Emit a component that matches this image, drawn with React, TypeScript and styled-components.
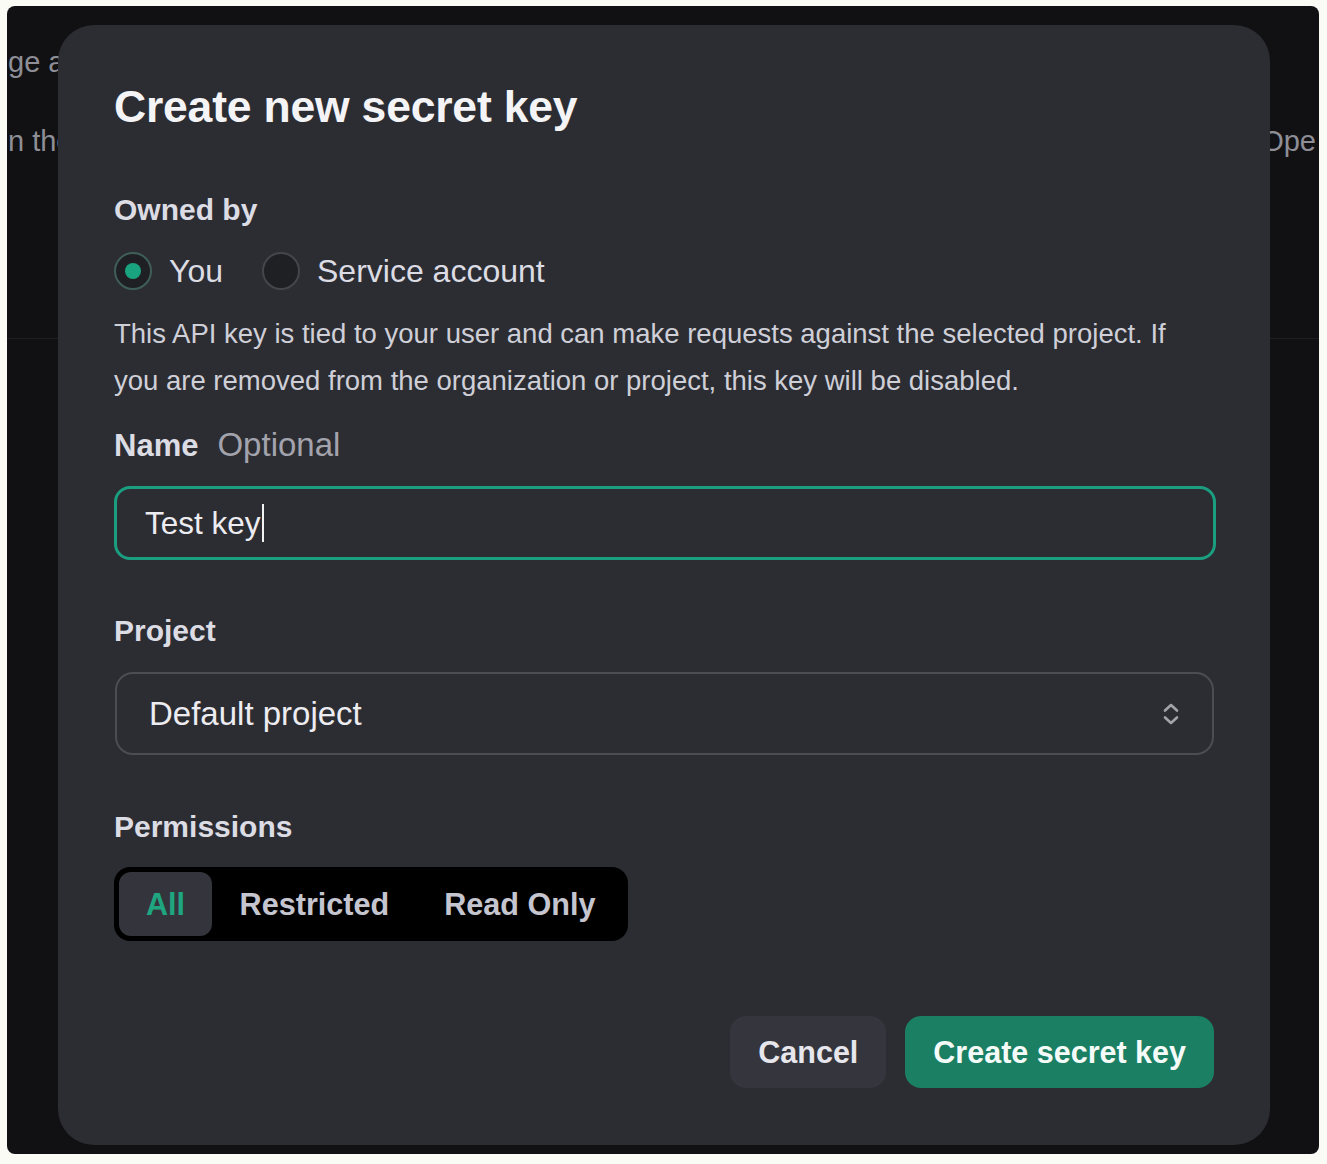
import React from "react";
import styled, { createGlobalStyle } from "styled-components";

const Global = createGlobalStyle`
  html, body { margin: 0; padding: 0; background: #fbfbf6; }
  body { font-family: "Liberation Sans", Arial, sans-serif; }
  * { box-sizing: border-box; }
`;

const Frame = styled.div`
  position: relative;
  margin: 6px 0 0 7px;
  width: 1312px;
  height: 1148px;
  border-radius: 8px;
  background: #111114;
  overflow: hidden;
  font-family: "Liberation Sans", Arial, sans-serif;
`;

const BgHeader = styled.div`
  height: 333px;
  border-bottom: 1px solid #1e1f22;
  padding-top: 40px;
  display: flex;
  flex-direction: column;
  gap: 47px;
`;

const BgLine = styled.div`
  display: flex;
  justify-content: space-between;
  white-space: nowrap;
  color: #8e8e96;
  font-size: 29px;
  line-height: 32px;
  padding: 0 3px 0 1px;
`;

const Modal = styled.div`
  position: absolute;
  left: 51px;
  top: 19px;
  width: 1212px;
  height: 1120px;
  border-radius: 36px;
  background: #2c2d32;
  padding: 55px 56px 0 56px;
  display: flex;
  flex-direction: column;
`;

const Title = styled.h2`
  margin: 0;
  font-size: 44.5px;
  line-height: 1.2;
  font-weight: 700;
  color: #f4f4f7;
  letter-spacing: -0.2px;
`;

const Label = styled.div<{ $mt: number }>`
  margin-top: ${(p) => p.$mt}px;
  font-size: 30px;
  line-height: 36px;
  font-weight: 700;
  color: #dcdce4;
  display: flex;
  align-items: baseline;
  gap: 19px;
`;

const NameText = styled.span`
  font-size: 31px;
`;

const Hint = styled.span`
  font-weight: 400;
  color: #a3a3ad;
  font-size: 33px;
`;

const RadioRow = styled.div`
  margin-top: 24px;
  display: flex;
  align-items: center;
  height: 38px;
`;

const RadioOption = styled.label`
  display: flex;
  align-items: center;
  gap: 17px;
  margin-right: 39px;
  font-size: 32px;
  color: #dcdce4;
  cursor: pointer;
`;

const RadioCircle = styled.span<{ $on?: boolean }>`
  width: 38px;
  height: 38px;
  border-radius: 50%;
  background: #1f2024;
  border: 2px solid ${(p) => (p.$on ? "#3f5e57" : "#45464c")};
  display: flex;
  align-items: center;
  justify-content: center;
  &::after {
    content: "";
    width: 16px;
    height: 16px;
    border-radius: 50%;
    background: ${(p) => (p.$on ? "#19a37f" : "transparent")};
  }
`;

const Body = styled.p`
  margin: 20px 0 0 0;
  max-width: 1090px;
  font-size: 27.5px;
  line-height: 47px;
  color: #cfcfd8;
`;

const InputBox = styled.div`
  margin-top: 22px;
  height: 74px;
  width: 1102px;
  border: 3px solid #1b9e80;
  border-radius: 16px;
  padding: 0 28px;
  display: flex;
  align-items: center;
  font-size: 31.5px;
  color: #ececf1;
`;

const Caret = styled.span`
  display: inline-block;
  width: 2px;
  height: 38px;
  background: #f2f2f2;
  margin-left: 1px;
`;

const Select = styled.div`
  margin-top: 23px;
  height: 83px;
  width: 1099px;
  margin-left: 1px;
  border: 2px solid #4c4d54;
  border-radius: 18px;
  padding: 0 32px;
  display: flex;
  align-items: center;
  justify-content: space-between;
  font-size: 33px;
  color: #ececf1;
`;

const Segmented = styled.div`
  margin-top: 22px;
  align-self: flex-start;
  height: 74px;
  background: #000;
  border-radius: 16px;
  padding: 5px;
  display: flex;
`;

const Segment = styled.div<{ $active?: boolean }>`
  padding: 0 ${(p) => (p.$active ? 27 : 27.5)}px;
  border-radius: 12px;
  display: flex;
  align-items: center;
  font-size: 30.6px;
  font-weight: 700;
  color: ${(p) => (p.$active ? "#1fa681" : "#c5c5d0")};
  background: ${(p) => (p.$active ? "#34353c" : "transparent")};
`;

const Footer = styled.div`
  margin-top: 75px;
  display: flex;
  justify-content: flex-end;
  gap: 19px;
  width: 1100px;
`;

const Button = styled.button<{ $primary?: boolean }>`
  height: 72px;
  padding: 0 28px;
  border: none;
  border-radius: 16px;
  font-family: "Liberation Sans", Arial, sans-serif;
  font-size: 30.5px;
  font-weight: 700;
  color: ${(p) => (p.$primary ? "#f5fbf8" : "#e6e6ec")};
  background: ${(p) => (p.$primary ? "#1b7f63" : "#35363d")};
  cursor: pointer;
`;

const UpDown = () => (
  <svg width="18" height="24" viewBox="0 0 18 24" fill="none" stroke="#a3a3ab" strokeWidth="2.6" strokeLinecap="round" strokeLinejoin="round">
    <path d="M3 8.5 L9 3 L15 8.5" />
    <path d="M3 15.5 L9 21 L15 15.5" />
  </svg>
);

export default function App() {
  return (
    <>
      <Global />
      <Frame>
        <BgHeader>
          <BgLine>
            <span>ge and view your API keys</span>
          </BgLine>
          <BgLine>
            <span>n the</span>
            <span>Ope</span>
          </BgLine>
        </BgHeader>
        <Modal>
          <Title>Create new secret key</Title>
          <Label $mt={59}>Owned by</Label>
          <RadioRow>
            <RadioOption>
              <RadioCircle $on />
              You
            </RadioOption>
            <RadioOption>
              <RadioCircle />
              Service account
            </RadioOption>
          </RadioRow>
          <Body>
            This API key is tied to your user and can make requests against the selected project. If
            you are removed from the organization or project, this key will be disabled.
          </Body>
          <Label $mt={23}>
            <NameText>Name</NameText> <Hint>Optional</Hint>
          </Label>
          <InputBox>
            Test key
            <Caret />
          </InputBox>
          <Label $mt={53}>Project</Label>
          <Select>
            <span>Default project</span>
            <UpDown />
          </Select>
          <Label $mt={54}>Permissions</Label>
          <Segmented>
            <Segment $active>All</Segment>
            <Segment>Restricted</Segment>
            <Segment>Read Only</Segment>
          </Segmented>
          <Footer>
            <Button>Cancel</Button>
            <Button $primary>Create secret key</Button>
          </Footer>
        </Modal>
      </Frame>
    </>
  );
}
